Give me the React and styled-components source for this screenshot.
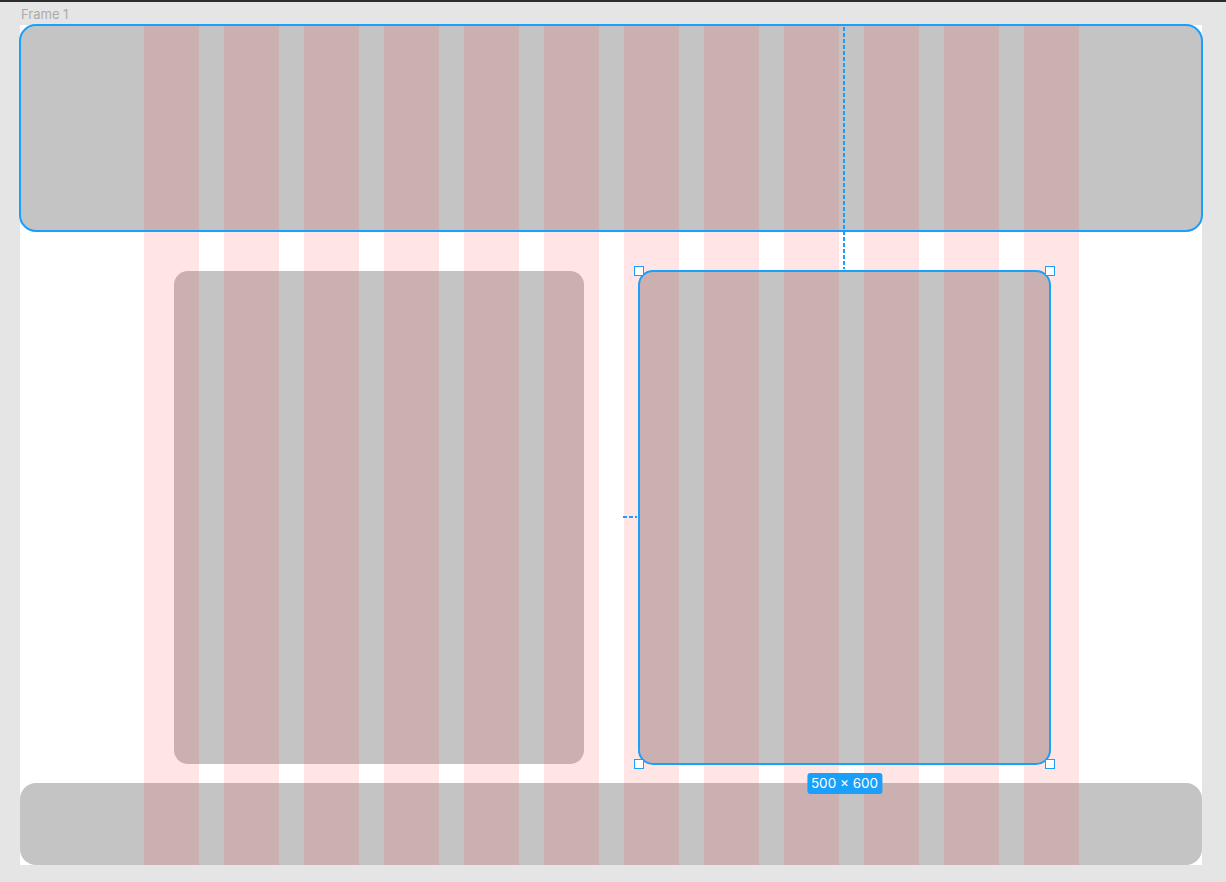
import React from "react";
import styled, {createGlobalStyle} from "styled-components";

const BLUE = "#18a0fb";
const COLUMNS = Array.from({length: 12}, (_, i) => i);

const GlobalStyle = createGlobalStyle`
  html, body {
    margin: 0;
    padding: 0;
    background: #e5e5e5;
    font-family: Inter, "Noto Sans", sans-serif;
  }
`;

const App = () => {
    return (
        <>
            <GlobalStyle/>
            <TopBar/>
            <Canvas>
                <FrameLabel>Frame 1</FrameLabel>
                <Frame>
                    <Header/>
                    <Main>
                        <Card/>
                        <Card selected>
                            <CenterGuide/>
                            <SideGuide/>
                            <Handle className="tl"/>
                            <Handle className="tr"/>
                            <Handle className="bl"/>
                            <Handle className="br"/>
                            <SizeBadge>500 × 600</SizeBadge>
                        </Card>
                    </Main>
                    <Footer/>
                    <Grid>
                        {COLUMNS.map((col) => (
                            <Column key={"col-" + col}/>
                        ))}
                    </Grid>
                </Frame>
            </Canvas>
        </>
    );
};

const TopBar = styled.div`
  height: 2px;
  background: #2c2c2c;
`;

const Canvas = styled.div`
  padding: 0 24px 17px 20px;
`;

const FrameLabel = styled.div`
  height: 23px;
  padding: 5px 0 0 1px;
  box-sizing: border-box;
  font-size: 13px;
  line-height: 15px;
  color: #ababab;
`;

const Frame = styled.div`
  position: relative;
  z-index: 0;
  width: 1182px;
  height: 840px;
  background: #ffffff;
  display: flex;
  flex-direction: column;
`;

const Block = styled.div`
  background: #c4c4c4;
  border-radius: 16px;
`;

const Header = styled(Block)`
  position: relative;
  height: 206px;
  flex-shrink: 0;

  &::after {
    content: "";
    position: absolute;
    inset: -1px;
    border: 2px solid ${BLUE};
    border-radius: 17px;
    z-index: 3;
    pointer-events: none;
  }
`;

const Main = styled.div`
  display: flex;
  gap: 55px;
  padding: 40px 0 19px 154px;
`;

const Card = styled(Block)`
  position: ${({selected}) => (selected ? "relative" : "static")};
  width: ${({selected}) => (selected ? 411 : 410)}px;
  height: 493px;
  border-radius: 14px;

  &::after {
    content: "";
    display: ${({selected}) => (selected ? "block" : "none")};
    position: absolute;
    inset: -1px;
    border: 2px solid ${BLUE};
    border-radius: 15px;
    z-index: 3;
    pointer-events: none;
  }
`;

const Handle = styled.span`
  position: absolute;
  width: 8px;
  height: 8px;
  background: #ffffff;
  border: 1px solid ${BLUE};
  z-index: 4;

  &.tl { left: -5px; top: -5px; }
  &.tr { right: -5px; top: -5px; }
  &.bl { left: -5px; bottom: -5px; }
  &.br { right: -5px; bottom: -5px; }
`;

const CenterGuide = styled.span`
  position: absolute;
  left: 204px;
  top: -244px;
  width: 2px;
  height: 242px;
  background: repeating-linear-gradient(to bottom, ${BLUE} 0 4px, transparent 4px 6px);
  z-index: 4;
`;

const SideGuide = styled.span`
  position: absolute;
  left: -16px;
  top: 245px;
  width: 14px;
  height: 2px;
  background: repeating-linear-gradient(to right, ${BLUE} 0 4px, transparent 4px 6px);
  z-index: 4;
`;

const SizeBadge = styled.div`
  position: absolute;
  left: 50%;
  top: calc(100% + 9px);
  transform: translateX(-50%);
  height: 21px;
  padding: 0 4px;
  border-radius: 3px;
  background: ${BLUE};
  color: #ffffff;
  font-size: 13.5px;
  line-height: 21px;
  white-space: nowrap;
  z-index: 4;
`;

const Footer = styled(Block)`
  flex: 1;
`;

const Grid = styled.div`
  position: absolute;
  inset: 0;
  display: flex;
  gap: 25px;
  padding-left: 124px;
  z-index: 2;
  pointer-events: none;
`;

const Column = styled.div`
  width: 55px;
  background: rgba(255, 0, 0, 0.1);
`;

export default App;
